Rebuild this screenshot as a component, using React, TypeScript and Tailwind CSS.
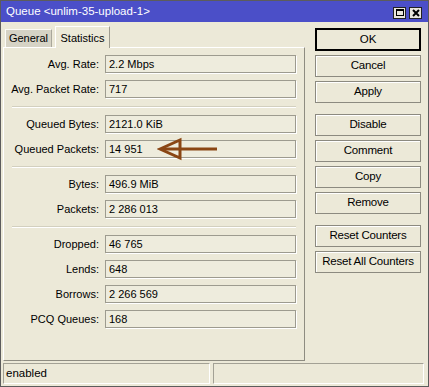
const STAT_GROUPS: [string, string][][] = [
  [
    ['Avg. Rate', '2.2 Mbps'],
    ['Avg. Packet Rate', '717'],
  ],
  [
    ['Queued Bytes', '2121.0 KiB'],
    ['Queued Packets', '14 951'],
  ],
  [
    ['Bytes', '496.9 MiB'],
    ['Packets', '2 286 013'],
  ],
  [
    ['Dropped', '46 765'],
    ['Lends', '648'],
    ['Borrows', '2 266 569'],
    ['PCQ Queues', '168'],
  ],
]

const BUTTON_GROUPS = [
  ['OK', 'Cancel', 'Apply'],
  ['Disable', 'Comment', 'Copy', 'Remove'],
  ['Reset Counters', 'Reset All Counters'],
]

function Arrow() {
  return (
    <svg
      className="absolute left-[51px] top-[-5px]"
      width="62"
      height="26"
      viewBox="0 0 62 26"
    >
      <g stroke="#8a4614" strokeWidth="3" fill="none" strokeLinejoin="miter">
        <polygon points="3,13 23,4 23,22" />
        <line x1="6" y1="13" x2="60" y2="13" />
      </g>
    </svg>
  )
}

function StatRow({ label, value }: { label: string; value: string }) {
  return (
    <div className="flex items-center gap-[6px] h-[18px]">
      <div className="w-[95px] text-right text-black">{label}:</div>
      <div className="relative w-[191px] h-[18px] flex items-center pl-[3px] border border-[#9d9b8f] shadow-[1px_1px_0_#ffffff] bg-[#eeecdd]">
        {value}
        {label === 'Queued Packets' && <Arrow />}
      </div>
    </div>
  )
}

export default function App() {
  return (
    <div className="w-[429px] h-[387px] flex flex-col border border-[#5c5c5c] bg-[#ece9d8] text-[11px] text-black font-['Liberation_Sans',Arial,sans-serif] select-none">
      {/* Title bar */}
      <div className="h-[21px] shrink-0 flex items-center justify-between bg-[#4b4fc8] pl-[5px] pr-[6px]">
        <span className="text-white text-[11.5px] leading-none">Queue &lt;unlim-35-upload-1&gt;</span>
        <div className="flex gap-[3px] mt-[2px]">
          <div className="w-[13px] h-[12px] flex items-center justify-center bg-[#e8e6dc] border border-[#222]">
            <div className="w-[8px] h-[7px] border border-black border-t-2" />
          </div>
          <div className="w-[13px] h-[12px] flex items-center justify-center bg-[#e8e6dc] border border-[#222]">
            <svg width="8" height="8" viewBox="0 0 8 8">
              <path d="M1 1 L7 7 M7 1 L1 7" stroke="#000" strokeWidth="2" />
            </svg>
          </div>
        </div>
      </div>

      {/* Body */}
      <div className="flex flex-1 min-h-0">
        {/* Tabs + panel */}
        <div className="w-[302px] ml-[2px] flex flex-col pb-[1px]">
          <div className="h-[25px] shrink-0 flex items-end pl-[2px] gap-[3px]">
            <div className="w-[47px] h-[18px] flex items-center justify-center bg-[#d6d3c5] border-t border-l border-[#fbfbf6] border-r border-r-[#a9a79b]">
              General
            </div>
            <div className="w-[55px] h-[22px] flex items-start justify-center pt-[3px] bg-[#ece9d8] border-t border-l border-[#ffffff] border-r border-r-[#9d9b8f] mb-[-1px] relative z-10">
              Statistics
            </div>
          </div>
          <div className="flex-1 flex flex-col gap-[7px] pt-[7px] border-t border-l border-white border-r border-b border-r-[#8e8c81] border-b-[#8e8c81]">
            {STAT_GROUPS.map((group, gi) => (
              <div key={gi} className="flex flex-col gap-[7px]">
                {gi > 0 && (
                  <div className="h-[3px] flex flex-col justify-end">
                    <div className="ml-[8px] w-[284px] h-[1px] bg-[#d3d0bf]" />
                    <div className="ml-[8px] w-[284px] h-[1px] bg-white" />
                  </div>
                )}
                {group.map(([label, value]) => (
                  <StatRow key={label} label={label} value={value} />
                ))}
              </div>
            ))}
          </div>
        </div>

        {/* Buttons */}
        <div className="ml-[10px] w-[106px] pt-[6px] flex flex-col gap-[11px]">
          {BUTTON_GROUPS.map((group, gi) => (
            <div key={gi} className="flex flex-col gap-[4px]">
              {group.map((b) => (
                <div
                  key={b}
                  className={
                    b === 'OK'
                      ? 'h-[23px] flex items-center justify-center border-2 border-black bg-[#ece9d8] text-[11.5px]'
                      : 'h-[22px] flex items-center justify-center border border-[#8c8a80] shadow-[inset_1px_1px_0_#ffffff] bg-[#ece9d8] text-[11.5px] tracking-[-0.2px]'
                  }
                >
                  {b}
                </div>
              ))}
            </div>
          ))}
        </div>
      </div>

      {/* Status bar */}
      <div className="h-[24px] shrink-0 flex gap-[3px] pl-[2px] pr-[4px] pt-[1px] pb-[2px]">
        <div className="w-[207px] flex items-center pl-[2px] border-t border-l border-[#a3a195] border-r border-b border-r-white border-b-white text-[11.5px]">
          enabled
        </div>
        <div className="flex-1 border-t border-l border-[#a3a195] border-r border-b border-r-white border-b-white" />
      </div>
    </div>
  )
}
